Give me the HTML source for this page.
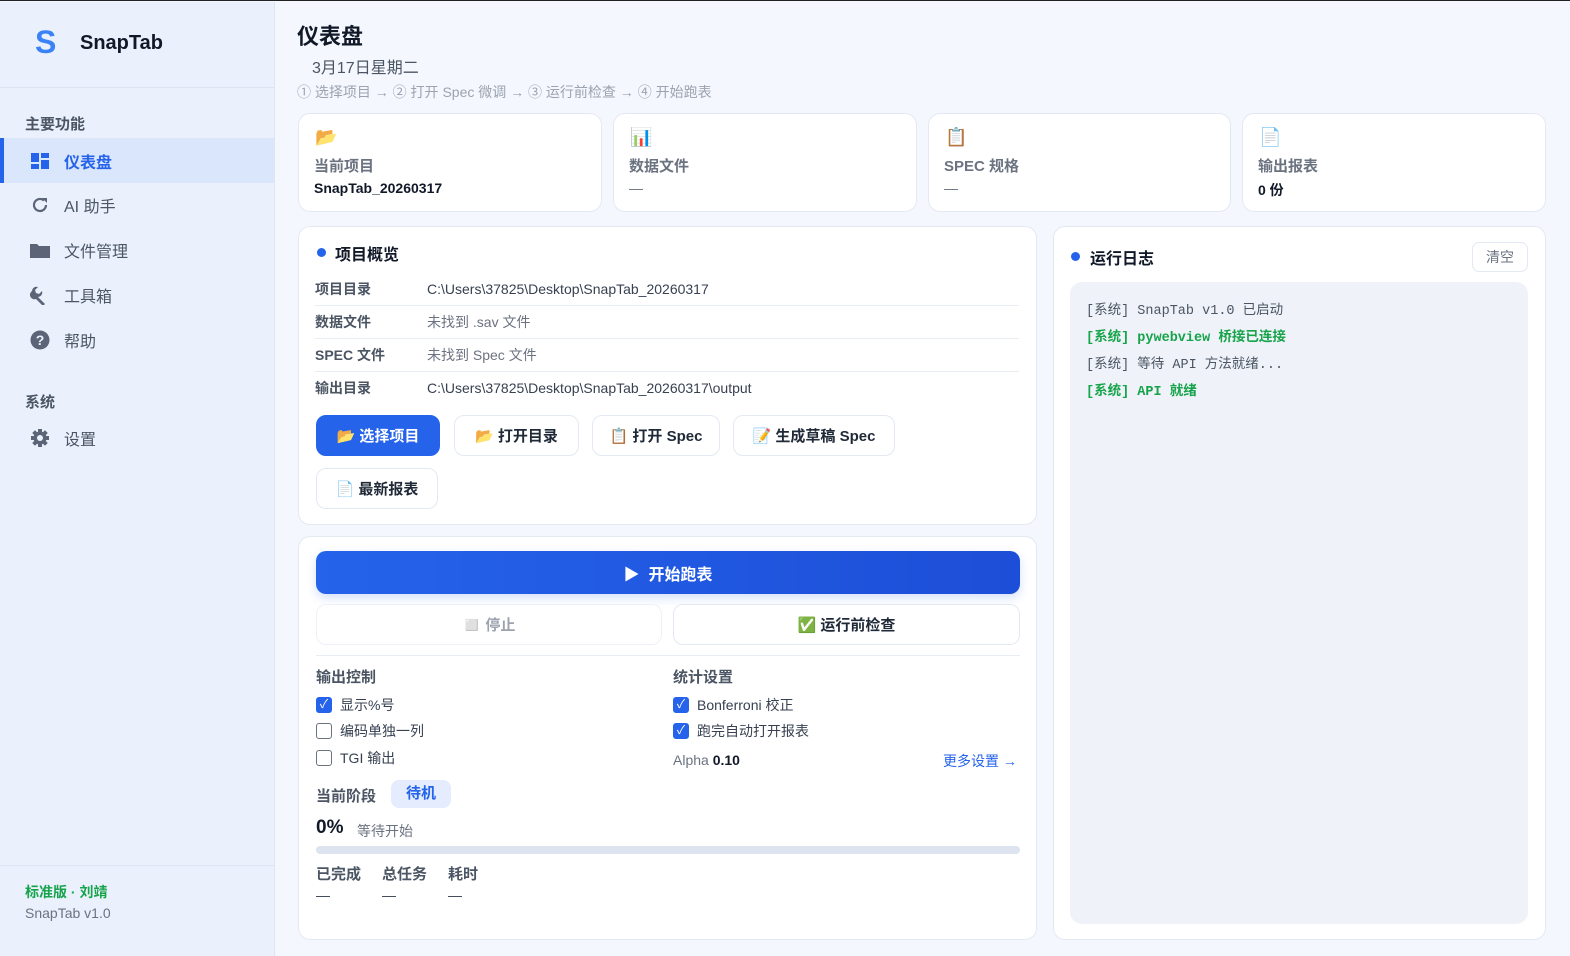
<!DOCTYPE html>
<html><head><meta charset="utf-8"><style>
*{margin:0;padding:0;box-sizing:border-box}
body{width:1570px;height:955px;overflow:hidden;background:#f4f7fd;font-family:"Liberation Sans","Noto Sans CJK SC",sans-serif;color:#1f2937;position:relative;border-top:1px solid #222}
.a{position:absolute}
.side{left:0;top:1px;width:275px;height:954px;background:#eaf1fd;border-right:1px solid #dde5f2}
.nav{position:absolute;left:0;width:274px;height:45px;display:flex;align-items:center;font-size:16px;color:#4b5563}
.nav .ic{width:20px;margin-left:30px;margin-right:14px;display:flex;justify-content:center}
.card{position:absolute;background:#fff;border:1px solid #e3e9f3;border-radius:12px}
.stat .l{position:absolute;left:15px;top:41px;font-size:15px;font-weight:bold;color:#6b7280}
.stat .v{position:absolute;left:15px;top:66px;font-size:14px;font-weight:bold;color:#111827}
.stat .i{position:absolute;left:16px;top:13px;font-size:18px}
.row{position:absolute;left:16px;width:704px;height:33px;border-bottom:1px solid #e8edf4;font-size:14px;display:flex;align-items:center}
.row b{width:112px;color:#4b5563}
.row span{color:#374151}
.btn{position:absolute;height:41px;border:1px solid #e3e9f3;border-radius:10px;background:#fff;font-size:15px;font-weight:bold;color:#1f2937;display:flex;align-items:center;justify-content:center;gap:4px}
.cb{position:absolute;font-size:14px;color:#374151;display:flex;align-items:center;gap:8px}
.box{width:16px;height:16px;border-radius:3px;border:1.5px solid #6b7280;background:#fff}
.box.on{background:#2563eb;border-color:#2563eb;color:#fff;font-size:12px;line-height:13px;text-align:center}
.h{font-size:15px;font-weight:bold;color:#4b5563}
.log{font-family:"Liberation Mono","Noto Sans CJK SC",monospace;font-size:13.5px;position:absolute;left:16px}
</style></head><body>
<div class="a side">
 <div class="a" style="left:35px;top:22px;font-size:32px;font-weight:bold;color:#3b82f6">S</div>
 <div class="a" style="left:80px;top:30px;font-size:20px;font-weight:bold;color:#111827">SnapTab</div>
 <div class="a" style="left:0;top:85px;width:274px;border-top:1px solid #dbe4f2"></div>
 <div class="a h" style="left:25px;top:111px;font-size:15px;color:#4b5563">主要功能</div>
 <div class="nav" style="top:136px;background:#d9e6fc;color:#2563eb;font-weight:bold;border-left:4px solid #2563eb"><span class="ic" style="margin-left:26px"><svg width="18" height="16"><rect x="0" y="0" width="8" height="9" fill="#2563eb"/><rect x="10" y="0" width="8" height="5" fill="#2563eb"/><rect x="0" y="11" width="8" height="5" fill="#2563eb"/><rect x="10" y="7" width="8" height="9" fill="#2563eb"/></svg></span>仪表盘</div>
 <div class="nav" style="top:180px"><span class="ic"><svg width="18" height="18" viewBox="0 0 18 18"><path d="M15 9a6 6 0 1 1-2-4.5" fill="none" stroke="#5b6577" stroke-width="2.2"/><path d="M11 2h5v5z" fill="#5b6577"/></svg></span>AI 助手</div>
 <div class="nav" style="top:225px"><span class="ic"><svg width="20" height="16"><path d="M0 2h7l2 2h11v12H0z" fill="#5b6577"/></svg></span>文件管理</div>
 <div class="nav" style="top:270px"><span class="ic"><svg width="20" height="20" viewBox="0 0 20 20"><path d="M2 6a4.5 4.5 0 0 1 6-4l-3 3 1 3 3 1 3-3a4.5 4.5 0 0 1-4 6l7 7-2 2-7-7a4.5 4.5 0 0 1-4-8z" fill="#5b6577"/></svg></span>工具箱</div>
 <div class="nav" style="top:315px"><span class="ic"><svg width="20" height="20"><circle cx="10" cy="10" r="9.5" fill="#5b6577"/><text x="10" y="15" font-size="14" font-weight="bold" fill="#eaf1fd" text-anchor="middle" font-family="Liberation Sans">?</text></svg></span>帮助</div>
 <div class="a h" style="left:25px;top:389px">系统</div>
 <div class="nav" style="top:413px"><span class="ic"><svg width="20" height="20" viewBox="0 0 20 20"><g fill="#5b6577"><circle cx="10" cy="10" r="6.5"/><rect x="8" y="1" width="4" height="18"/><rect x="1" y="8" width="18" height="4"/><rect x="8" y="1" width="4" height="18" transform="rotate(45 10 10)"/><rect x="8" y="1" width="4" height="18" transform="rotate(-45 10 10)"/></g><circle cx="10" cy="10" r="3" fill="#eaf1fd"/></svg></span>设置</div>
 <div class="a" style="left:0;top:863px;width:274px;border-top:1px solid #dbe4f2"></div>
 <div class="a" style="left:25px;top:880px;font-size:14px;font-weight:bold;color:#16a34a">标准版 · 刘靖</div>
 <div class="a" style="left:25px;top:903px;font-size:14px;color:#6b7280">SnapTab v1.0</div>
</div>

<div class="a" style="left:297px;top:18px;font-size:22px;font-weight:bold;color:#111827">仪表盘</div>
<div class="a" style="left:312px;top:53px;font-size:16px;color:#4b5563">3月17日星期二</div>
<div class="a" style="left:297px;top:81px;font-size:14px;color:#9ca3af">① 选择项目 → ② 打开 Spec 微调 → ③ 运行前检查 → ④ 开始跑表</div>

<div class="card stat" style="left:298px;top:112px;width:304px;height:99px"><div class="i">📂</div><div class="l">当前项目</div><div class="v">SnapTab_20260317</div></div>
<div class="card stat" style="left:613px;top:112px;width:304px;height:99px"><div class="i">📊</div><div class="l">数据文件</div><div class="v" style="font-weight:normal;color:#6b7280">—</div></div>
<div class="card stat" style="left:928px;top:112px;width:303px;height:99px"><div class="i">📋</div><div class="l">SPEC 规格</div><div class="v" style="font-weight:normal;color:#6b7280">—</div></div>
<div class="card stat" style="left:1242px;top:112px;width:304px;height:99px"><div class="i">📄</div><div class="l">输出报表</div><div class="v">0 份</div></div>

<div class="card" style="left:298px;top:225px;width:739px;height:299px">
 <div class="a" style="left:18px;top:21px;width:9px;height:9px;border-radius:50%;background:#2563eb"></div>
 <div class="a" style="left:36px;top:14px;font-size:16px;font-weight:bold;color:#111827">项目概览</div>
 <div class="row" style="top:46px"><b>项目目录</b><span>C:\Users\37825\Desktop\SnapTab_20260317</span></div>
 <div class="row" style="top:79px"><b>数据文件</b><span style="color:#6b7280">未找到 .sav 文件</span></div>
 <div class="row" style="top:112px"><b>SPEC 文件</b><span style="color:#6b7280">未找到 Spec 文件</span></div>
 <div class="row" style="top:144px;border:none"><b>输出目录</b><span>C:\Users\37825\Desktop\SnapTab_20260317\output</span></div>
 <div class="btn" style="left:17px;top:188px;width:124px;background:#2563eb;border-color:#2563eb;color:#fff">📂 选择项目</div>
 <div class="btn" style="left:155px;top:188px;width:125px">📂 打开目录</div>
 <div class="btn" style="left:293px;top:188px;width:128px">📋 打开 Spec</div>
 <div class="btn" style="left:434px;top:188px;width:162px">📝 生成草稿 Spec</div>
 <div class="btn" style="left:17px;top:241px;width:122px">📄 最新报表</div>
</div>

<div class="card" style="left:298px;top:535px;width:739px;height:404px">
 <div class="btn" style="left:17px;top:14px;width:704px;height:43px;background:linear-gradient(90deg,#2563eb,#1d4ed8);border:none;color:#fff;font-size:16px;box-shadow:0 4px 10px rgba(37,99,235,.2)">▶&nbsp; 开始跑表</div>
 <div class="btn" style="left:17px;top:67px;width:346px;color:#9ca3af;border-color:#eef2f7">◻️ 停止</div>
 <div class="btn" style="left:374px;top:67px;width:347px">✅ 运行前检查</div>
 <div class="a" style="left:17px;top:118px;width:704px;border-top:1px solid #e8edf4"></div>
 <div class="a h" style="left:17px;top:129px">输出控制</div>
 <div class="cb" style="left:17px;top:158px"><div class="box on">✓</div>显示%号</div>
 <div class="cb" style="left:17px;top:184px"><div class="box"></div>编码单独一列</div>
 <div class="cb" style="left:17px;top:211px"><div class="box"></div>TGI 输出</div>
 <div class="a h" style="left:374px;top:129px">统计设置</div>
 <div class="cb" style="left:374px;top:158px"><div class="box on">✓</div>Bonferroni 校正</div>
 <div class="cb" style="left:374px;top:184px"><div class="box on">✓</div>跑完自动打开报表</div>
 <div class="a" style="left:374px;top:215px;font-size:14px;color:#6b7280">Alpha <b style="color:#111827">0.10</b></div>
 <div class="a" style="left:644px;top:214px;font-size:14px;color:#2563eb">更多设置 →</div>
 <div class="a h" style="left:17px;top:248px">当前阶段</div>
 <div class="a" style="left:92px;top:243px;width:60px;height:28px;border-radius:8px;background:#e4ecfd;color:#2563eb;font-size:15px;font-weight:bold;text-align:center;line-height:28px">待机</div>
 <div class="a" style="left:17px;top:280px;font-size:19px;font-weight:bold;color:#111827">0%</div>
 <div class="a" style="left:58px;top:284px;font-size:14px;color:#6b7280">等待开始</div>
 <div class="a" style="left:17px;top:309px;width:704px;height:8px;border-radius:4px;background:#dde4ef"></div>
 <div class="a h" style="left:17px;top:326px">已完成</div>
 <div class="a h" style="left:83px;top:326px">总任务</div>
 <div class="a h" style="left:149px;top:326px">耗时</div>
 <div class="a" style="left:17px;top:350px;font-size:14px;color:#374151">—</div>
 <div class="a" style="left:83px;top:350px;font-size:14px;color:#374151">—</div>
 <div class="a" style="left:149px;top:350px;font-size:14px;color:#374151">—</div>
</div>

<div class="card" style="left:1053px;top:225px;width:493px;height:714px">
 <div class="a" style="left:17px;top:25px;width:9px;height:9px;border-radius:50%;background:#2563eb"></div>
 <div class="a" style="left:36px;top:18px;font-size:16px;font-weight:bold;color:#111827">运行日志</div>
 <div class="a" style="left:418px;top:15px;width:56px;height:30px;border:1px solid #e3e9f3;border-radius:7px;font-size:14px;color:#6b7280;text-align:center;line-height:28px">清空</div>
 <div class="a" style="left:16px;top:55px;width:458px;height:642px;border-radius:12px;background:#eff3f9">
  <div class="log" style="top:16px;color:#4b5563">[系统] SnapTab v1.0 已启动</div>
  <div class="log" style="top:43px;color:#16a34a;font-weight:bold">[系统] pywebview 桥接已连接</div>
  <div class="log" style="top:70px;color:#4b5563">[系统] 等待 API 方法就绪...</div>
  <div class="log" style="top:97px;color:#16a34a;font-weight:bold">[系统] API 就绪</div>
 </div>
</div>
</body></html>
